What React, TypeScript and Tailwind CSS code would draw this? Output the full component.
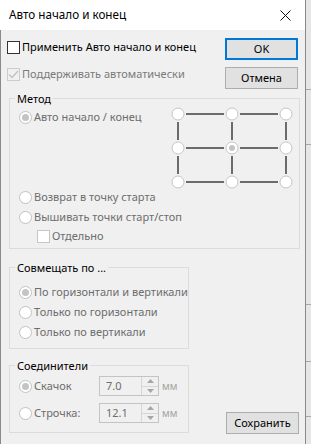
import React from 'react';

const font = { fontFamily: '"Noto Sans", "Liberation Sans", sans-serif' };

function Radio({ checked }: { checked?: boolean }) {
  return (
    <span className="w-[13px] h-[13px] rounded-full border border-[#c2c2c2] bg-white flex items-center justify-center shrink-0">
      {checked && <span className="w-[7px] h-[7px] rounded-full bg-[#c4c4c4]" />}
    </span>
  );
}

function RadioRow({ label, checked, h = 'h-[20px]' }: { label: string; checked?: boolean; h?: string }) {
  return (
    <div className={`flex items-center gap-[2px] whitespace-nowrap ${h}`}>
      <Radio checked={checked} />
      <span className="text-[#6d6d6d]">{label}</span>
    </div>
  );
}

function Group({ title, className, children }: { title: string; className: string; children: React.ReactNode }) {
  return (
    <div className={`relative border border-[#dcdcdc] ${className}`}>
      {/* caption sits on the top border */}
      <span className="absolute left-[5px] top-[-8px] px-[2px] bg-[#f0f0f0] leading-[15px] text-black whitespace-nowrap">{title}</span>
      {children}
    </div>
  );
}

function Spin({ value }: { value: string }) {
  return (
    <div className="flex items-center gap-[3px]">
      <div className="w-[60px] h-[20px] border border-[#c4c4c4] flex">
        <span className="flex-1 pl-[6px] leading-[18px] text-[#6d6d6d]">{value}</span>
        <div className="w-[17px] flex flex-col border-l border-[#d6d6d6]">
          <div className="flex-1 flex items-center justify-center border-b border-[#d6d6d6]">
            <svg width="7" height="4" viewBox="0 0 7 4"><path d="M0 4 L3.5 0 L7 4 Z" fill="#a6a6a6" /></svg>
          </div>
          <div className="flex-1 flex items-center justify-center">
            <svg width="7" height="4" viewBox="0 0 7 4"><path d="M0 0 L3.5 4 L7 0 Z" fill="#a6a6a6" /></svg>
          </div>
        </div>
      </div>
      <span className="text-[10px] text-[#a3a3a3]">мм</span>
    </div>
  );
}

function Btn({ label, primary, className = '' }: { label: string; primary?: boolean; className?: string }) {
  return (
    <div
      className={`w-[73px] h-[22px] flex items-center justify-center bg-[#e1e1e1] text-black ${
        primary ? 'border-2 border-[#0078d7]' : 'border border-[#adadad]'
      } ${className}`}
    >
      {label}
    </div>
  );
}

function PointGrid() {
  const xs = [7, 61, 115];
  const ys = [7, 41, 75];
  return (
    <svg width="122" height="82" viewBox="0 0 122 82">
      {ys.map((y) => (
        <g key={'h' + y}>
          <line x1="15" y1={y} x2="53" y2={y} stroke="#6b6b6b" strokeWidth="2" />
          <line x1="69" y1={y} x2="107" y2={y} stroke="#6b6b6b" strokeWidth="2" />
        </g>
      ))}
      {xs.map((x) => (
        <g key={'v' + x}>
          <line x1={x} y1="15" x2={x} y2="33" stroke="#6b6b6b" strokeWidth="2" />
          <line x1={x} y1="49" x2={x} y2="67" stroke="#6b6b6b" strokeWidth="2" />
        </g>
      ))}
      {ys.map((y) =>
        xs.map((x) => (
          <g key={x + '-' + y}>
            <circle cx={x} cy={y} r="6" fill="#fff" stroke="#c6c6c6" strokeWidth="1" />
            {x === 61 && y === 41 && <circle cx={x} cy={y} r="3" fill="#c4c4c4" />}
          </g>
        ))
      )}
    </svg>
  );
}

export default function App() {
  return (
    <div className="w-[311px] h-[444px] flex bg-[#e6e6e6] overflow-hidden text-[11px]" style={font}>
      {/* dialog window */}
      <div className="w-[306px] h-full flex flex-col border-r border-[#888888]">
        {/* title bar */}
        <div className="h-[30px] bg-white flex items-center justify-between pl-[9px] pr-[14px] shrink-0">
          <span className="text-black text-[11.7px]">Авто начало и конец</span>
          <svg width="11" height="11" viewBox="0 0 11 11">
            <path d="M0.5 0.5 L10.5 10.5 M10.5 0.5 L0.5 10.5" stroke="#111" strokeWidth="1" />
          </svg>
        </div>

        <div className="flex-1 bg-[#f0f0f0] border-l border-[#8a8a8a] pl-[6px] pt-[8px] leading-[16px]">
          {/* options + main buttons */}
          <div className="flex justify-between pr-[7px]">
            <div className="flex flex-col gap-[9px]">
              <div className="flex items-center gap-[2px] h-[18px] whitespace-nowrap">
                <span className="w-[13px] h-[13px] border border-[#333] bg-white shrink-0" />
                <span className="text-black">Применить Авто начало и конец</span>
              </div>
              <div className="flex items-center gap-[2px] h-[18px] whitespace-nowrap">
                <span className="w-[13px] h-[13px] border border-[#cccccc] flex items-center justify-center shrink-0">
                  <svg width="11" height="9" viewBox="0 0 11 9">
                    <path d="M1 4.5 L4 7.5 L10 1" fill="none" stroke="#c2c2c2" strokeWidth="1.4" />
                  </svg>
                </span>
                <span className="text-[#7a7a7a]">Поддерживать автоматически</span>
              </div>
            </div>
            <div className="flex flex-col gap-[7px]">
              <Btn label="OK" primary />
              <Btn label="Отмена" />
            </div>
          </div>

          {/* method */}
          <Group title="Метод" className="mt-[9px] ml-[2px] w-[291px] h-[151px] pl-[9px]">
            <div className="flex justify-between items-start pt-[8px] pr-[6px] h-[88px]">
              <div className="mt-[1px]">
                <RadioRow label="Авто начало / конец" checked h="h-[18px]" />
              </div>
              <PointGrid />
            </div>
            <RadioRow label="Возврат в точку старта" />
            <RadioRow label="Вышивать точки старт/стоп" />
            <div className="flex items-center gap-[2px] h-[18px] pl-[18px]">
              <span className="w-[13px] h-[13px] border border-[#c6c6c6] bg-white shrink-0" />
              <span className="text-[#6d6d6d]">Отдельно</span>
            </div>
          </Group>

          {/* bottom */}
          <div className="flex items-end justify-between pr-[6px]">
            <div className="flex flex-col ml-[2px]">
              <Group title="Совмещать по ..." className="mt-[18px] w-[180px] h-[82px] pl-[9px] pt-[14px]">
                <RadioRow label="По горизонтали и вертикали" checked />
                <RadioRow label="Только по горизонтали" />
                <RadioRow label="Только по вертикали" />
              </Group>
              <Group title="Соединители" className="mt-[16px] w-[180px] h-[68px] pl-[9px] pt-[10px]">
                <div className="flex flex-col gap-[7px]">
                  <div className="flex items-center h-[20px]">
                    <div className="w-[80px]">
                      <RadioRow label="Скачок" checked />
                    </div>
                    <Spin value="7.0" />
                  </div>
                  <div className="flex items-center h-[20px]">
                    <div className="w-[80px]">
                      <RadioRow label="Строчка:" />
                    </div>
                    <Spin value="12.1" />
                  </div>
                </div>
              </Group>
            </div>
            <Btn label="Сохранить" className="h-[21px] mb-[-1px]" />
          </div>
        </div>
      </div>

      {/* window behind the dialog */}
      <div className="flex-1 flex flex-col">
        <div className="h-[90px] border-b border-[#a8a8a8]" />
        <div className="h-[55px] border-b border-[#a8a8a8]" />
        <div className="h-[160px] border-b border-[#a8a8a8]" />
        <div className="h-[57px] border-b border-[#a8a8a8]" />
        <div className="h-[55px] border-b border-[#a8a8a8]" />
      </div>
    </div>
  );
}
